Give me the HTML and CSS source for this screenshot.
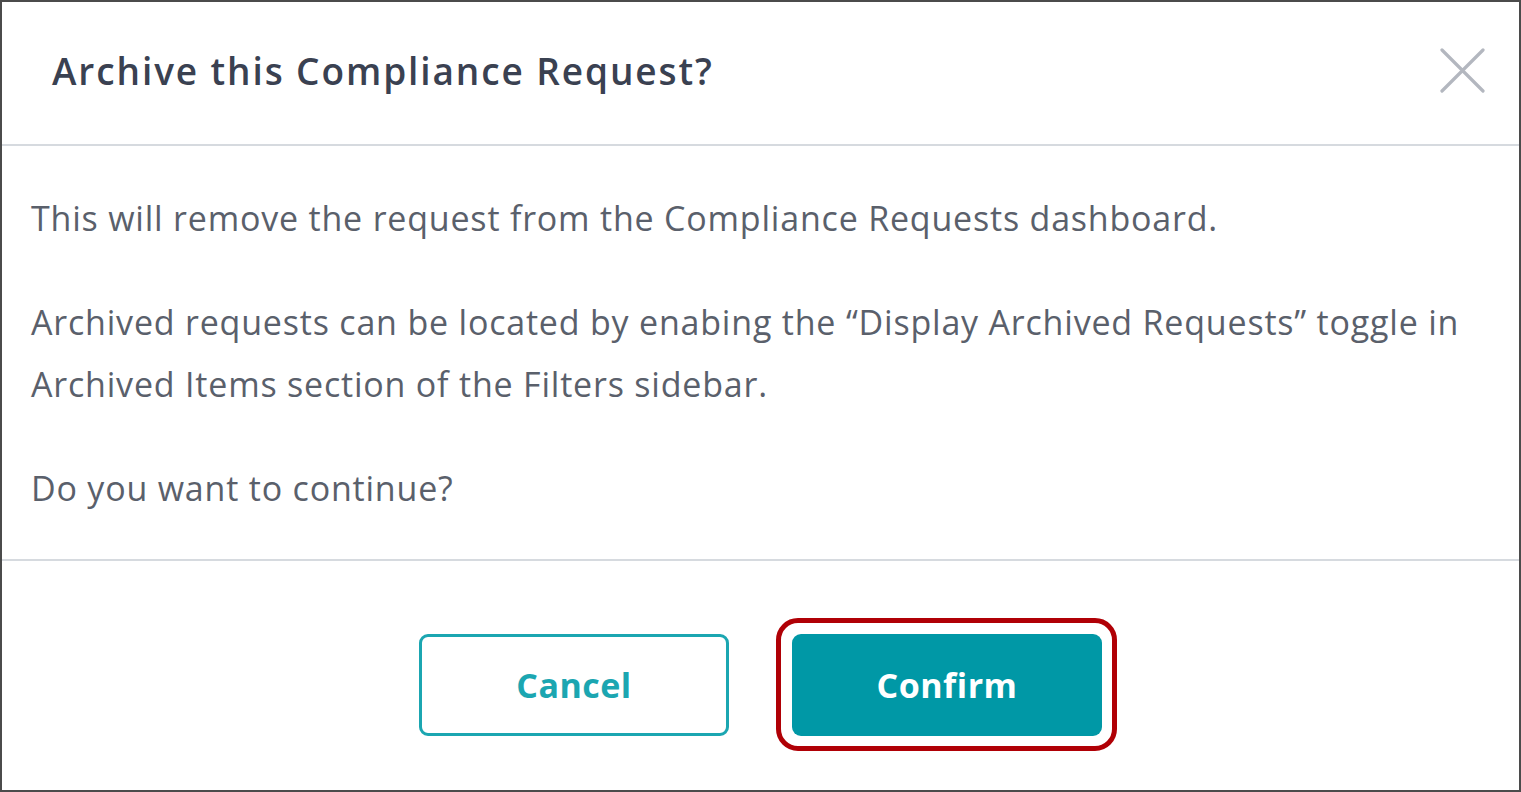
FILE: index.html
```html
<!DOCTYPE html>
<html lang="en">
  <head>
    <meta charset="UTF-8" />
    <meta name="viewport" content="width=device-width, initial-scale=1.0" />
    <title>Archive this Compliance Request?</title>
    <link rel="stylesheet" href="styles.css">
  </head>
  <body>
    <div class="modal">
      <div class="modal-header">
        <h2 class="modal-title">Archive this Compliance Request?</h2>
        <button class="close" aria-label="Close">
          <svg width="45" height="45" viewBox="0 0 45 45">
            <path d="M2 2 L43 43 M43 2 L2 43" stroke="#b3b7bf" stroke-width="3.2" stroke-linecap="round" fill="none" />
          </svg>
        </button>
      </div>
      <div class="modal-body">
        <p>This will remove the request from the Compliance Requests dashboard.</p>
        <p>Archived requests can be located by enabing the “Display Archived Requests” toggle in Archived Items section of the Filters sidebar.</p>
        <p>Do you want to continue?</p>
      </div>
      <div class="modal-footer">
        <button class="btn btn-outline">Cancel</button>
        <div class="highlight">
          <button class="btn btn-primary">Confirm</button>
        </div>
      </div>
    </div>
  </body>
</html>
```

FILE: styles.css
```css
:root {
  --teal: #0098a6;
  --teal-line: #1ba6b1;
  --title: #3a4151;
  --text: #5a606b;
  --rule: #d6dadf;
  --font: 'Open Sans', 'Noto Sans', Arial, sans-serif;
}
html, body {
  margin: 0;
  height: 100%;
  font-family: var(--font);
  background: #fff;
}
.modal {
  box-sizing: border-box;
  height: 100%;
  border: 2px solid #4b4b4b;
  display: flex;
  flex-direction: column;
}
.modal-header {
  box-sizing: border-box;
  height: 144px;
  display: flex;
  align-items: center;
  justify-content: space-between;
  padding: 0 34px 6px 50px;
  border-bottom: 2px solid var(--rule);
}
.modal-title {
  margin: 0;
  font-size: 37px;
  font-weight: 600;
  color: var(--title);
  letter-spacing: 1.9px;
}
.close {
  border: 0;
  background: none;
  padding: 0;
  width: 45px;
  height: 45px;
  cursor: pointer;
}
.modal-body {
  padding: 41px 29px 40px;
  border-bottom: 2px solid var(--rule);
}
.modal-body p {
  margin: 0 0 42px;
  font-size: 34px;
  line-height: 62px;
  letter-spacing: 0.8px;
  color: var(--text);
}
.modal-body p:last-child { margin-bottom: 0; }
.modal-footer {
  flex: 1;
  display: flex;
  justify-content: center;
  align-items: flex-start;
  gap: 63px;
  padding-top: 73px;
}
.btn {
  box-sizing: border-box;
  width: 310px;
  height: 102px;
  border-radius: 9px;
  font-family: var(--font);
  font-size: 34px;
  font-weight: 700;
  letter-spacing: 0.5px;
  cursor: pointer;
}
.btn-outline {
  background: #fff;
  border: 3px solid var(--teal-line);
  color: var(--teal-line);
}
.btn-primary {
  background: var(--teal);
  border: 0;
  color: #fff;
}
.highlight {
  position: relative;
  display: flex;
}
.highlight::after {
  content: '';
  position: absolute;
  inset: -16px -15px -15px -16px;
  border: 5px solid #b00006;
  border-radius: 22px;
  pointer-events: none;
}
```
